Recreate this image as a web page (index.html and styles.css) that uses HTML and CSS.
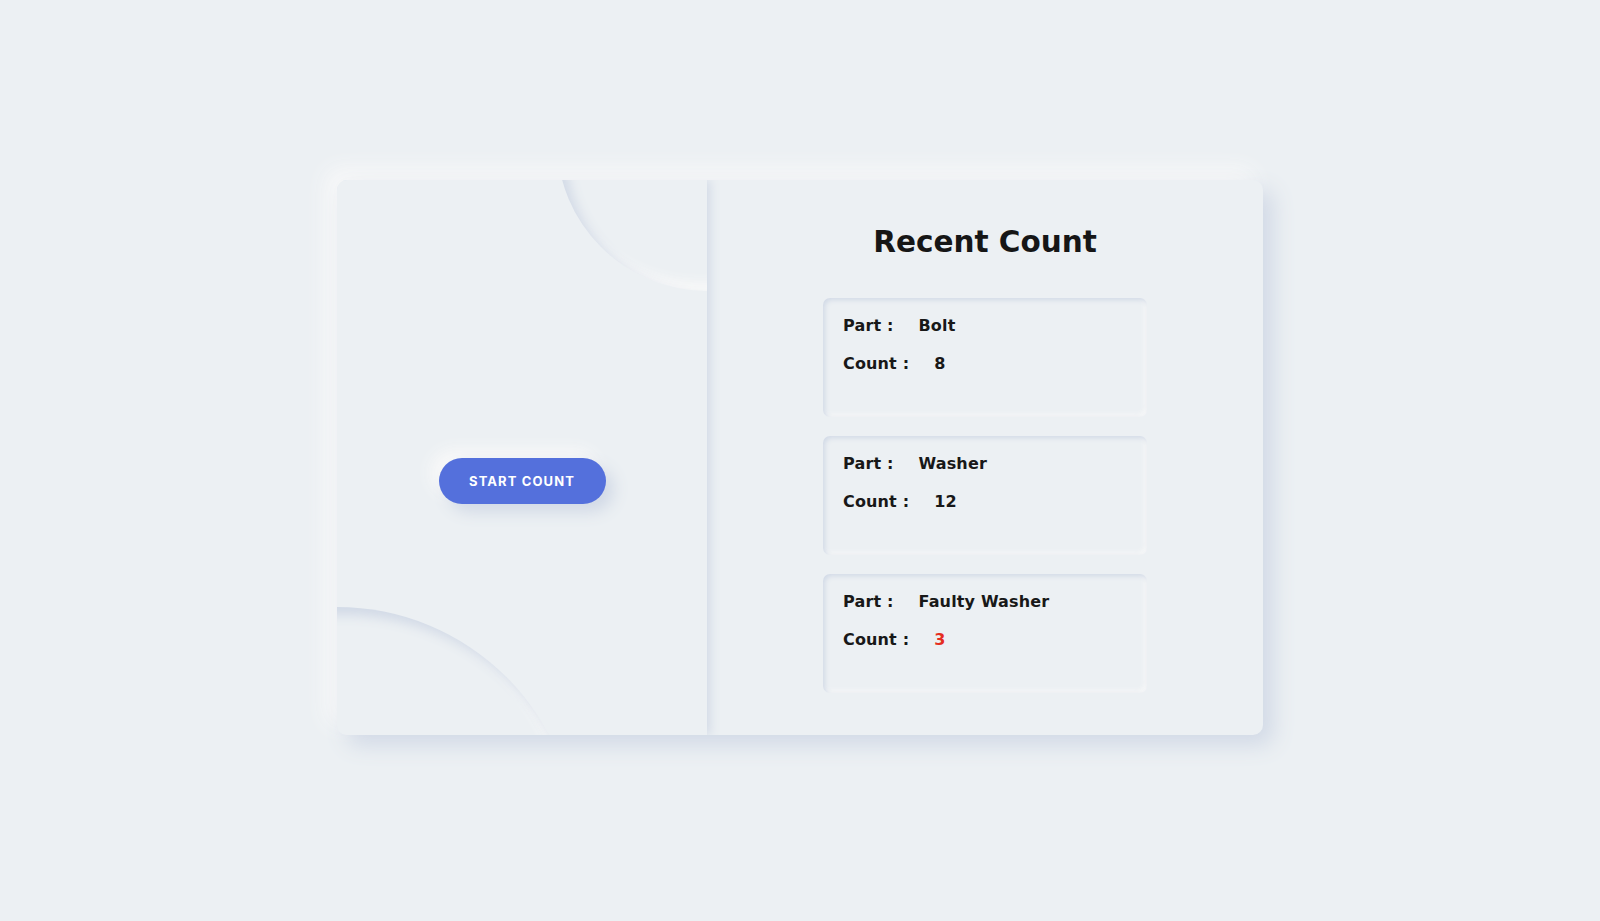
FILE: index.html
```html
<!DOCTYPE html>
<html lang="en">
<head>
<meta charset="utf-8">
<title>Recent Count</title>
<link rel="stylesheet" href="styles.css">
</head>
<body>
  <main class="card">
    <section class="left-panel">
      <div class="circle circle-top"></div>
      <div class="circle circle-bottom"></div>
      <button class="start-btn" type="button">START COUNT</button>
    </section>
    <section class="right-panel">
      <h2 class="title">Recent Count</h2>
      <div class="entries">
        <div class="entry">
          <p class="line"><span class="label">Part :</span><span class="value">Bolt</span></p>
          <p class="line"><span class="label">Count :</span><span class="value">8</span></p>
        </div>
        <div class="entry">
          <p class="line"><span class="label">Part :</span><span class="value">Washer</span></p>
          <p class="line"><span class="label">Count :</span><span class="value">12</span></p>
        </div>
        <div class="entry">
          <p class="line"><span class="label">Part :</span><span class="value">Faulty Washer</span></p>
          <p class="line"><span class="label">Count :</span><span class="value value-alert">3</span></p>
        </div>
      </div>
    </section>
  </main>
</body>
</html>
```

FILE: styles.css
```css
* { box-sizing: border-box; }

html, body {
  margin: 0;
  padding: 0;
  background: #ecf0f3;
}

body {
  min-height: 100vh;
  display: flex;
  align-items: center;
  justify-content: center;
  padding-bottom: 6px;
  font-family: "DejaVu Sans", "Open Sans", sans-serif;
  color: #181818;
}

.card {
  width: 926px;
  height: 555px;
  display: flex;
  background: #ecf0f3;
  border-radius: 10px;
  overflow: hidden;
  box-shadow: 10px 10px 22px #d1d9e6, -10px -10px 22px #f9f9f9;
}

.left-panel {
  position: relative;
  z-index: 1;
  width: 370px;
  flex: 0 0 370px;
  overflow: hidden;
  background: #ecf0f3;
  box-shadow: 3px 0 10px #d1d9e6;
  display: flex;
  flex-direction: column;
  align-items: center;
  padding-top: 278px;
}

.circle {
  position: absolute;
  border-radius: 50%;
  background: #ecf0f3;
  box-shadow: inset 8px 8px 12px #d1d9e6, inset -8px -8px 12px #f9f9f9;
}

.circle-top {
  width: 300px;
  height: 300px;
  left: 220px;
  top: -189px;
}

.circle-bottom {
  width: 480px;
  height: 480px;
  left: -240px;
  top: 427px;
}

.start-btn {
  position: relative;
  width: 167px;
  height: 46px;
  border: none;
  border-radius: 23px;
  background: #5470dc;
  color: #ffffff;
  font-family: "Inter", "Liberation Sans", sans-serif;
  font-weight: 700;
  font-size: 13px;
  letter-spacing: 1.1px;
  padding: 0;
  box-shadow: 8px 8px 16px #d1d9e6, -8px -8px 16px #f9f9f9;
}

.right-panel {
  flex: 1;
  display: flex;
  flex-direction: column;
  align-items: center;
  padding-top: 45px;
}

.title {
  margin: 0 0 38px;
  font-size: 29.5px;
  line-height: 35px;
  font-weight: 700;
  color: #161616;
}

.entries {
  display: flex;
  flex-direction: column;
  gap: 19px;
}

.entry {
  width: 324px;
  height: 119px;
  border-radius: 7px;
  padding: 9px 20px 34px;
  box-shadow: inset 2px 2px 5px #d1d9e6, inset -2px -2px 5px #f9f9f9;
}

.line {
  margin: 0;
  font-size: 16px;
  line-height: 38px;
  font-weight: 700;
  letter-spacing: 0.15px;
  white-space: nowrap;
}

.value {
  margin-left: 25px;
}

.value-alert {
  color: #e52d20;
}
```
